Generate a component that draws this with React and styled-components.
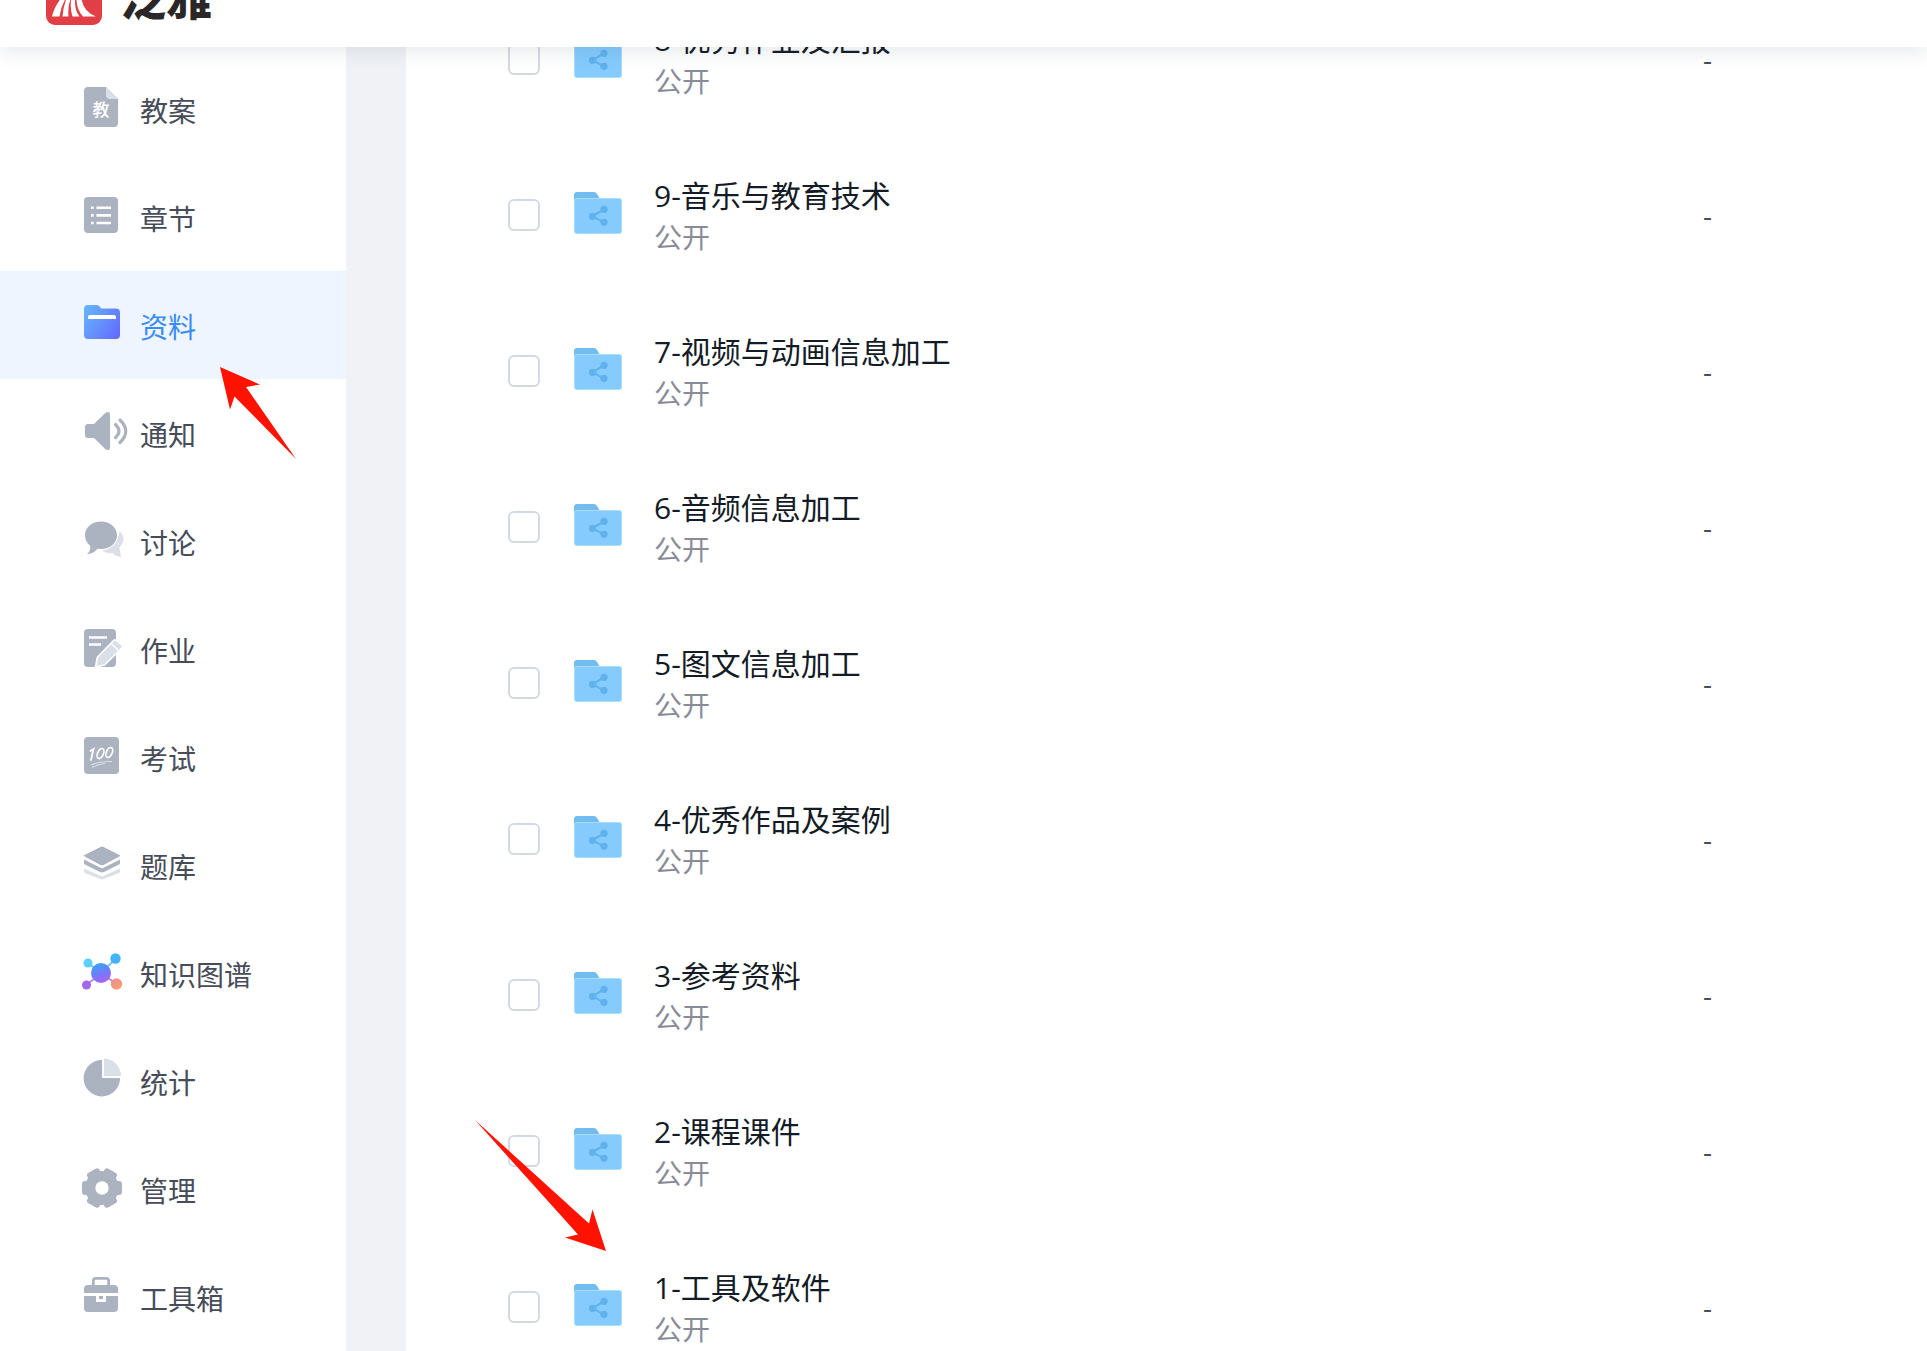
import React from 'react';
import styled, { createGlobalStyle } from 'styled-components';

const GREY = '#abb3c0';
const PALE = '#dbe0e8';

const GlobalStyle = createGlobalStyle`
  * {
    box-sizing: border-box;
  }

  body {
    margin: 0;
    background: #fff;
    font-family: 'Open Sans', 'Noto Sans CJK SC', sans-serif;
  }
`;

const Page = styled.div`
  position: relative;
  display: flex;
  flex-direction: column;
  height: 100vh;
  overflow: hidden;
`;

const Header = styled.header`
  display: flex;
  align-items: flex-end;
  flex: none;
  height: 47px;
  padding: 0 46px 22px;
  background: #fff;
  box-shadow: 0 4px 20px rgba(40, 55, 80, 0.12);
  z-index: 1;
`;

const Brand = styled.a`
  display: flex;
  align-items: flex-end;
  gap: 18px;
  color: #2b2728;
  font-size: 46px;
  font-weight: 900;
  line-height: 56px;
  text-decoration: none;

  svg {
    display: block;
  }
`;

const Body = styled.div`
  display: flex;
  flex: 1;
  min-height: 0;
  background: #f0f2f6;
`;

const Sidebar = styled.nav`
  flex: none;
  width: 346px;
  padding-top: 8px;
  background: #fff;
`;

const NavItem = styled.a`
  display: flex;
  align-items: center;
  gap: 12px;
  height: 108px;
  padding-left: 80px;
  background: ${({ $active }) => ($active ? '#eef5ff' : 'transparent')};
  color: ${({ $active }) => ($active ? '#3a8bf6' : '#474c59')};
  font-size: 28px;
  line-height: 40px;
  text-decoration: none;

  span {
    padding-top: 4px;
  }
`;

const Content = styled.main`
  flex: 1;
  min-width: 0;
  margin-left: 60px;
  overflow: hidden;
  background: #fff;
`;

// the list is scrolled, its first row sits partly under the header
const FileTable = styled.table`
  width: 100%;
  margin-top: -64px;
  border-collapse: collapse;
  table-layout: fixed;
`;

const Row = styled.tr`
  height: 156px;
`;

const Cell = styled.td`
  width: ${({ $width }) => $width || 'auto'};
  padding: 0;
  vertical-align: middle;
`;

const SizeCell = styled(Cell)`
  padding-bottom: 4px;
  color: #474c59;
  font-size: 28px;
  line-height: 40px;
`;

const CheckBox = styled.input`
  display: block;
  appearance: none;
  width: 32px;
  height: 32px;
  margin: 0 0 4px 102px;
  border: 2px solid #d2d9e3;
  border-radius: 6px;
  background: #fff;

  &:checked {
    border-color: #3a8bf6;
    background: #3a8bf6;
  }
`;

const FileLabel = styled.label`
  display: flex;
  align-items: center;
  gap: 32px;

  svg {
    flex: none;
    margin-bottom: 8px;
  }
`;

const FileName = styled.div`
  padding-bottom: 2px;
  color: #131b26;
  font-size: 30px;
  line-height: 38px;
`;

const FileStatus = styled.div`
  color: #8a8b99;
  font-size: 28px;
  line-height: 40px;
`;

const Arrow = styled.svg`
  position: absolute;
  left: ${({ $left }) => $left}px;
  top: ${({ $top }) => $top}px;
  z-index: 2;
  pointer-events: none;
`;

const icons = {
  plan: (
    <>
      <path fill={GREY} d="M8 2h18l12 12v24a4 4 0 0 1-4 4H8a4 4 0 0 1-4-4V6a4 4 0 0 1 4-4z" />
      <path fill={PALE} d="M26 2l12 12h-8a4 4 0 0 1-4-4z" />
      <text x="21" y="31" fill="#fff" fontSize="17" fontWeight="500" textAnchor="middle">教</text>
    </>
  ),
  chapter: (
    <>
      <rect x="4" y="4" width="34" height="36" rx="4" fill={GREY} />
      <path stroke="#fff" strokeWidth="2.6" d="M11 14.7h2.6M16.5 14.7H31M11 22.4h2.6M16.5 22.4H31M11 30h2.6M16.5 30H31" />
    </>
  ),
  folder: (
    <>
      <defs>
        <linearGradient id="folder" x1="0" y1="0.2" x2="1" y2="0.8">
          <stop offset="0" stopColor="#65b2fd" />
          <stop offset="1" stopColor="#636dfc" />
        </linearGradient>
      </defs>
      <path fill="url(#folder)" d="M8 4h8.5q2 0 3.2 1.6L21 7.5h15a4 4 0 0 1 4 4V34a4 4 0 0 1-4 4H8a4 4 0 0 1-4-4V8a4 4 0 0 1 4-4z" />
      <path fill="#fff" d="M10 14h24a2 2 0 0 1 2 2v2H8v-2a2 2 0 0 1 2-2z" />
    </>
  ),
  notice: (
    <>
      <path fill={GREY} d="M8 15h6L25 4.300q5-3.500 5 1.700v32q0 5.200-5 1.700L14 29H8q-3 0-3-3v-8q0-3 3-3z" />
      <path fill="none" stroke={GREY} strokeWidth="3.2" strokeLinecap="round" d="M35.500 15.500q7 6.500 0 13M40 11q11.500 11 0 22.500" />
    </>
  ),
  discuss: (
    <>
      <path fill={PALE} d="M39.500 14q8 8 0 16.500.5 4.500 1.500 9.500-5.500-.5-8.500-4-5.500.8-11-2.300 16-2 18-19.700z" />
      <path fill={GREY} d="M21 4.500c9 0 16 6 16 13.800S30 32 21 32l-3.500-.2C14.500 35.500 11 37 7 37c2.500-2 3.500-4.500 3.300-8C7 26.500 5 22.800 5 18.300 5 10.500 12 4.500 21 4.500z" />
    </>
  ),
  homework: (
    <>
      <rect x="4" y="4" width="32" height="38" rx="4" fill={GREY} />
      <path stroke="#fff" strokeWidth="2.4" d="M9 12.500h18M9 19.500h12" />
      <path fill={PALE} stroke="#fff" strokeWidth="1.6" d="M15.500 42l1.800-9.500L33.500 15.500q1.500-1.300 3 0l5.500 4.500q1.500 1.500 0 3L24.500 40z" />
      <path stroke="#fff" strokeWidth="1.4" d="M31 18.500l7.500 7" />
    </>
  ),
  exam: (
    <>
      <rect x="4" y="4" width="35" height="37" rx="4" fill={GREY} />
      <path fill="none" stroke="#fff" strokeWidth="1.8" strokeLinecap="round" d="M10.500 18l3-2-2.500 11" />
      <ellipse cx="20.5" cy="20.5" rx="2.9" ry="5.3" transform="rotate(24 20.5 20.5)" fill="none" stroke="#fff" strokeWidth="1.7" />
      <ellipse cx="29.3" cy="19.5" rx="2.9" ry="5.3" transform="rotate(24 29.3 19.5)" fill="none" stroke="#fff" strokeWidth="1.7" />
      <path fill="none" stroke={PALE} strokeWidth="1.1" d="M11 32q9-4 21-3.500M12 34.500q5-3 13-4" />
    </>
  ),
  bank: (
    <>
      <path fill={PALE} d="M4 27.500l18 8 18-8v3q0 1-1 1.500L24 38q-2 .8-4 0L5 32q-1-.5-1-1.500z" />
      <path fill={GREY} d="M4 18.500l18 9 18-9v3.500q0 1-1 1.500L24 31q-2 .9-4 0L5 23.500q-1-.5-1-1.500z" />
      <path fill={GREY} stroke="#fff" strokeWidth="1" d="M20.500 5.500q1.500-.7 3 0L39.500 13.500q2 1.200 0 2.400L23.500 24.500q-1.500.7-3 0L4.500 15.900q-2-1.200 0-2.400z" />
    </>
  ),
  graph: (
    <>
      <defs>
        <linearGradient id="core" x1="0.3" y1="0" x2="0.7" y2="1">
          <stop offset="0" stopColor="#35a5f8" />
          <stop offset="0.5" stopColor="#6f7cfb" />
          <stop offset="1" stopColor="#b45df5" />
        </linearGradient>
        <linearGradient id="ember" x1="0" y1="0" x2="1" y2="1">
          <stop offset="0" stopColor="#e88aa0" />
          <stop offset="1" stopColor="#ffa45c" />
        </linearGradient>
      </defs>
      <path fill="none" stroke="#6cc9fa" strokeWidth="2" d="M8 14l13 10L35.500 10" />
      <path fill="none" stroke="#c38ae0" strokeWidth="2" d="M6.500 36L21 24l15.500 11" />
      <circle cx="8" cy="14" r="4.5" fill="#5ad0fa" />
      <circle cx="35.5" cy="9.5" r="5.2" fill="#43b4fb" />
      <circle cx="6.5" cy="36" r="4.5" fill="#a566ee" />
      <circle cx="36.5" cy="35" r="5.7" fill="url(#ember)" />
      <circle cx="21" cy="24" r="10" fill="url(#core)" />
    </>
  ),
  stats: (
    <>
      <path fill={GREY} d="M22 3v18h18a18.200 18.200 0 1 1-18-18z" />
      <path fill={PALE} d="M24 1.500A17.500 17.500 0 0 1 41 19H24z" />
    </>
  ),
  manage: (
    <>
      <g fill={GREY}>
        <circle cx="22" cy="23" r="17" />
        <rect x="2" y="16" width="40" height="14" rx="3" />
        <rect x="2" y="16" width="40" height="14" rx="3" transform="rotate(60 22 23)" />
        <rect x="2" y="16" width="40" height="14" rx="3" transform="rotate(120 22 23)" />
      </g>
      <circle cx="22" cy="23" r="6.7" fill="#fff" />
    </>
  ),
  tools: (
    <>
      <path fill="none" stroke={GREY} strokeWidth="2.8" d="M13.300 13V8q0-2.700 2.700-2.700h10q2.700 0 2.700 2.700v5" />
      <path fill={GREY} d="M8 12h26a4 4 0 0 1 4 4v4H4v-4a4 4 0 0 1 4-4z" />
      <path fill={GREY} d="M4 23h12v6h10v-6h12v12a4 4 0 0 1-4 4H8a4 4 0 0 1-4-4z" />
      <rect x="19" y="23" width="4" height="3" fill={GREY} />
    </>
  ),
};

const menu = [
  { icon: 'plan', label: '教案' },
  { icon: 'chapter', label: '章节' },
  { icon: 'folder', label: '资料', active: true },
  { icon: 'notice', label: '通知' },
  { icon: 'discuss', label: '讨论' },
  { icon: 'homework', label: '作业' },
  { icon: 'exam', label: '考试' },
  { icon: 'bank', label: '题库' },
  { icon: 'graph', label: '知识图谱' },
  { icon: 'stats', label: '统计' },
  { icon: 'manage', label: '管理' },
  { icon: 'tools', label: '工具箱' },
];

const files = [
  '8-优秀作业及汇报',
  '9-音乐与教育技术',
  '7-视频与动画信息加工',
  '6-音频信息加工',
  '5-图文信息加工',
  '4-优秀作品及案例',
  '3-参考资料',
  '2-课程课件',
  '1-工具及软件',
];

const Logo = () => (
  <svg width="56" height="56" viewBox="0 0 56 56" aria-hidden="true">
    <rect width="56" height="56" rx="9" fill="#e13e45" />
    <g fill="#fff">
      <path d="M6 47.500Q8 38 16 28l4 1q-5 8-6.500 18.500z" />
      <path d="M16.500 47.500Q17 38 21 28l4 1q-3.500 8-2.500 18.500z" />
      <path d="M26.500 47.500Q23.500 38 25.500 28l4 .5Q27.500 39 33.500 47.500z" />
      <path d="M37 47.500Q30 40 30.500 28h5Q36 42 50 47.500z" />
    </g>
  </svg>
);

const SharedFolder = () => (
  <svg width="48" height="42" viewBox="0 0 48 42" aria-hidden="true">
    <path fill="#73bdee" d="M3 0h17q2 0 3 2l3 5v6H0V3q0-3 3-3z" />
    <rect y="6" width="48" height="36" rx="3" fill="#a9dcfd" />
    <rect x="1" y="7" width="46" height="34" rx="2" fill="#85cbfe" />
    <path fill="none" stroke="#5fb2ec" strokeWidth="2" d="M30 17.300L18.500 24.300 30 30.300" />
    <g fill="#5fb2ec">
      <circle cx="30" cy="17.3" r="3.6" />
      <circle cx="18.5" cy="24.3" r="3.6" />
      <circle cx="30" cy="30.3" r="3.6" />
    </g>
  </svg>
);

const FileRow = ({ name }) => {
  const id = `file-${name.split('-')[0]}`;
  return (
    <Row>
      <Cell $width="168px">
        <CheckBox type="checkbox" id={id} />
      </Cell>
      <Cell>
        <FileLabel htmlFor={id}>
          <SharedFolder />
          <div>
            <FileName>{name}</FileName>
            <FileStatus>公开</FileStatus>
          </div>
        </FileLabel>
      </Cell>
      <SizeCell $width="224px">-</SizeCell>
    </Row>
  );
};

const App = () => {
  return (
    <Page>
      <GlobalStyle />
      <Header>
        <Brand href="#home">
          <Logo />
          <span>泛雅</span>
        </Brand>
      </Header>
      <Body>
        <Sidebar>
          {menu.map((item) => (
            <NavItem key={item.icon} href={`#${item.icon}`} $active={item.active}>
              <svg width="48" height="48" viewBox="0 0 48 48" aria-hidden="true">
                {icons[item.icon]}
              </svg>
              <span>{item.label}</span>
            </NavItem>
          ))}
        </Sidebar>
        <Content>
          <FileTable>
            <tbody>
              {files.map((name) => (
                <FileRow key={name} name={name} />
              ))}
            </tbody>
          </FileTable>
        </Content>
      </Body>
      <Arrow $left={220} $top={367} width="76" height="92" viewBox="0 0 76 92" aria-hidden="true">
        <path fill="#ff1200" d="M0 0l40 17.500-14 2.500L76 92 14.500 29.500 10 42.500z" />
      </Arrow>
      <Arrow $left={475} $top={1120} width="132" height="132" viewBox="0 0 132 132" aria-hidden="true">
        <path fill="#ff1200" d="M0 0l114 103.500 3.500-14L131 131 90 117.500l13-3z" />
      </Arrow>
    </Page>
  );
};

export default App;
